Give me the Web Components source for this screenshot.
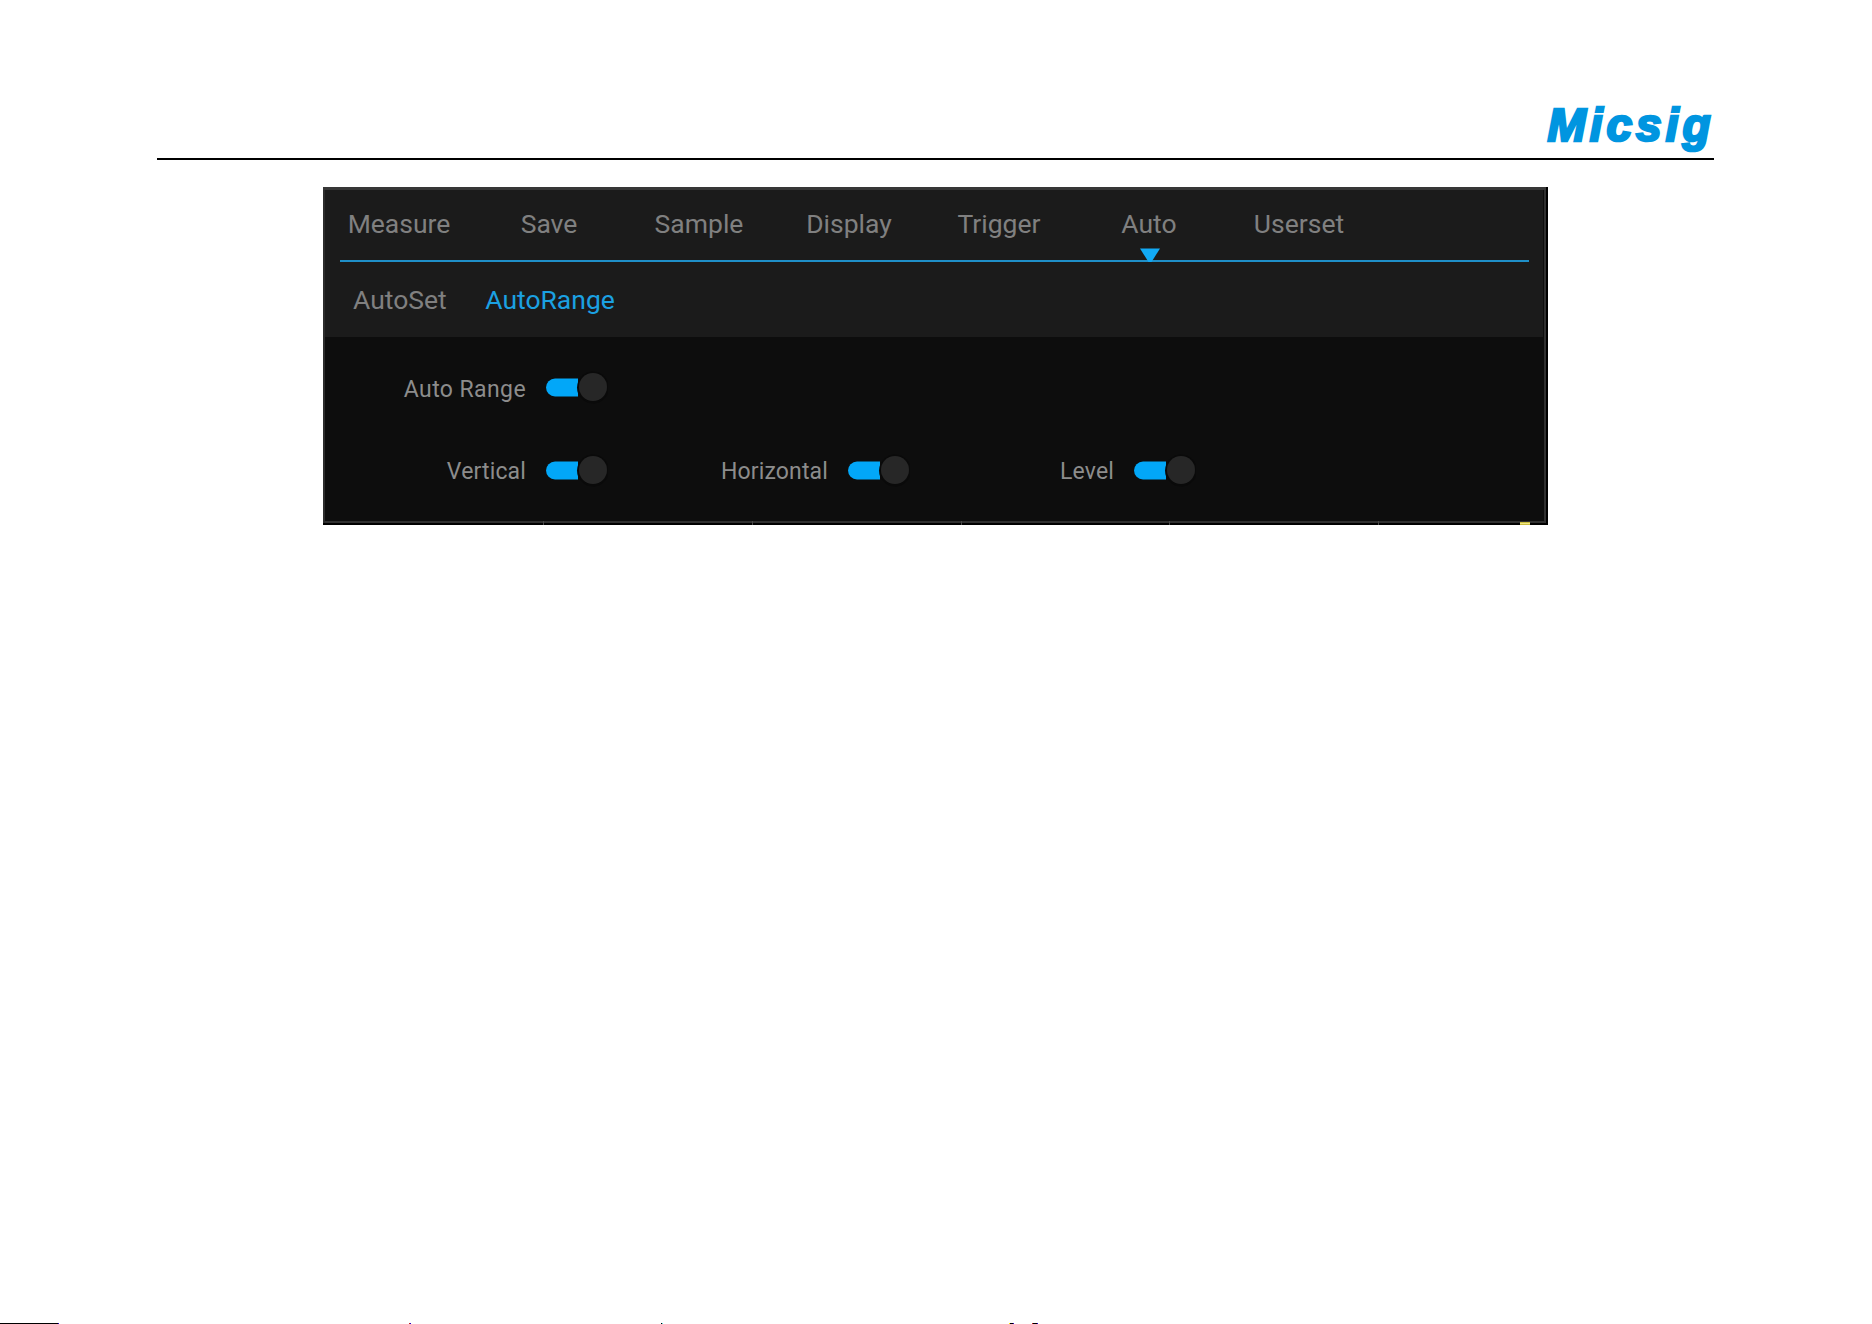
<!DOCTYPE html>
<html lang="en">
<head>
<meta charset="utf-8">
<title>Micsig</title>
<style>
  body {
    margin: 0;
    background: #fff;
    font-family: Roboto, "Liberation Sans", sans-serif;
  }
</style>
</head>
<body>
<manual-page>
  <settings-panel>
    <tab-bar slot="tabs">
      <tab-item>Measure</tab-item>
      <tab-item>Save</tab-item>
      <tab-item>Sample</tab-item>
      <tab-item>Display</tab-item>
      <tab-item>Trigger</tab-item>
      <tab-item active>Auto</tab-item>
      <tab-item>Userset</tab-item>
    </tab-bar>
    <sub-tab slot="subtabs">AutoSet</sub-tab>
    <sub-tab slot="subtabs" active>AutoRange</sub-tab>
    <toggle-switch class="range" style="--w: 283px; --drop: 6px; letter-spacing: .4px">Auto Range</toggle-switch>
    <toggle-switch style="--w: 283px">Vertical</toggle-switch>
    <toggle-switch style="--w: 302px">Horizontal</toggle-switch>
    <toggle-switch style="--w: 286px">Level</toggle-switch>
  </settings-panel>
</manual-page>

<script>
function attach(el, html) {
    const template = document.createElement('template');
    template.innerHTML = html;
    const root = el.attachShadow({ mode: 'open' });
    root.appendChild(template.content.cloneNode(true));
    return root;
}

class BrandLogo extends HTMLElement {
    constructor() {
      super();
      attach(this, `
        <style>
          :host { display: block; width: 180px; height: 72px; }
          svg { display: block; }
          text {
            font: italic bold 46px "Liberation Sans", Arial, sans-serif;
            fill: #0095e0;
            stroke: #0095e0;
            stroke-width: 2.6px;
          }
        </style>
        <svg width="180" height="72">
          <text x="13.500" y="54.500" textLength="163" lengthAdjust="spacing">Micsig</text>
        </svg>
      `);
    }
}

class ManualPage extends HTMLElement {
    constructor() {
      super();
      attach(this, `
        <style>
          :host {
            display: flex;
            flex-direction: column;
            box-sizing: border-box;
            height: 1324px;
            overflow: hidden;
          }
          header {
            display: flex;
            justify-content: flex-end;
            align-items: flex-end;
            box-sizing: border-box;
            height: 160px;
            margin: 0 158px 27px 157px;
            border-bottom: 2px solid #000;
          }
          main { flex: 1; padding-left: 323px; }
          footer { height: 1px; }
          footer svg { display: block; }
        </style>
        <header><brand-logo></brand-logo></header>
        <main><slot></slot></main>
        <footer>
          <svg width="1872" height="1" shape-rendering="crispEdges">
            <path d="M0 .5H58M661 .5h1M1010 .5h3M1033 .5h4" stroke="#000"/>
            <path d="M58 .5h1M410 .5h1M1013 .5h1M1037 .5h1" stroke="#2a00c8"/>
            <path d="M409 .5h1M1032 .5h1" stroke="#c02020"/>
            <path d="M1009 .5h1" stroke="#ffe000"/>
            <path d="M662 .5h1" stroke="#50e0e0"/>
          </svg>
        </footer>
      `);
    }
}

class SettingsPanel extends HTMLElement {
    constructor() {
      super();
      attach(this, `
        <style>
          :host {
            display: flex;
            flex-direction: column;
            position: relative;
            box-sizing: border-box;
            width: 1225px;
            height: 338px;
            background: #0d0d0d;
            border: solid #000;
            border-width: 0 2px 2px 0;
            box-shadow: inset 0 3px #373737, inset 2px 0 #2c2c2c, inset -2px -2px #303030;
          }
          .head {
            height: 147px;
            margin: 3px 3px 0 2px;
            background: #1b1b1b;
          }
          .subtabs {
            display: flex;
            gap: 38.500px;
            padding: 0 28px;
            height: 75px;
            align-items: center;
          }
          .body {
            display: flex;
            flex-wrap: wrap;
            align-content: flex-start;
            padding: 8px 8px 0 2px;
          }
          ::slotted(.range) { margin-right: 800px; }
          /* waveform grid showing below the panel */
          .edge { position: absolute; left: 0; bottom: -2px; }
        </style>
        <div class="head">
          <slot name="tabs"></slot>
          <div class="subtabs"><slot name="subtabs"></slot></div>
        </div>
        <div class="body"><slot></slot></div>
        <svg class="edge" width="1223" height="4">
          <path d="M220.500 0v4M429.500 0v4M638.500 0v4M846.500 0v4M1055.500 0v4" stroke="#484848"/>
          <path d="M1197 1h10v3h-10z" fill="#c9bc40"/>
          <path d="M1197 2h10v1h-10z" fill="#f0e780"/>
        </svg>
      `);
    }
}

class TabBar extends HTMLElement {
    constructor() {
      super();
      attach(this, `
        <style>
          :host {
            display: flex;
            box-sizing: border-box;
            height: 72px;
            margin: 0 14px 0 15px;
            border-bottom: 2px solid #1f8fc8;
          }
          .tabs { display: flex; margin-left: -16px; }
        </style>
        <div class="tabs"><slot></slot></div>
      `);
    }
}

class TabItem extends HTMLElement {
    constructor() {
      super();
      attach(this, `
        <style>
          :host {
            display: block;
            position: relative;
            width: 150px;
            padding-top: 17px;
            text-align: center;
            font-size: 26.500px;
            line-height: 34px;
            color: #808080;
          }
          svg { display: none; }
          :host([active]) svg {
            display: block;
            position: absolute;
            left: 66px;
            top: 58px;
          }
        </style>
        <slot></slot>
        <svg width="20" height="14"><path d="M0 .5H20L11.500 14h-3z" fill="#12aaf5"/></svg>
      `);
    }
}

class SubTab extends HTMLElement {
    constructor() {
      super();
      attach(this, `
        <style>
          :host {
            display: block;
            font-size: 26.500px;
            line-height: 34px;
            color: #808080;
          }
          :host([active]) { color: #1ba1e2; }
        </style>
        <slot></slot>
      `);
    }
}

class ToggleSwitch extends HTMLElement {
    constructor() {
      super();
      attach(this, `
        <style>
          :host {
            display: flex;
            align-items: center;
            justify-content: flex-end;
            gap: 18px;
            height: 83px;
            box-sizing: border-box;
            width: var(--w);
            min-width: var(--w);
            font-size: 23px;
            letter-spacing: .15px;
            color: #8c8c8c;
          }
          label { padding-top: var(--drop, 3px); }
          svg { display: block; }
        </style>
        <label><slot></slot></label>
        <svg width="64" height="34">
          <path d="M11 8.500H34V26.500H11A9 9 0 0 1 11 8.500z" fill="#02a7f8"/>
          <circle cx="49" cy="17.500" r="16" fill="#0a0a0a"/>
          <circle cx="49" cy="17" r="14" fill="#272727"/>
        </svg>
      `);
    }
}

customElements.define('brand-logo', BrandLogo);
customElements.define('manual-page', ManualPage);
customElements.define('settings-panel', SettingsPanel);
customElements.define('tab-bar', TabBar);
customElements.define('tab-item', TabItem);
customElements.define('sub-tab', SubTab);
customElements.define('toggle-switch', ToggleSwitch);
</script>
</body>
</html>
